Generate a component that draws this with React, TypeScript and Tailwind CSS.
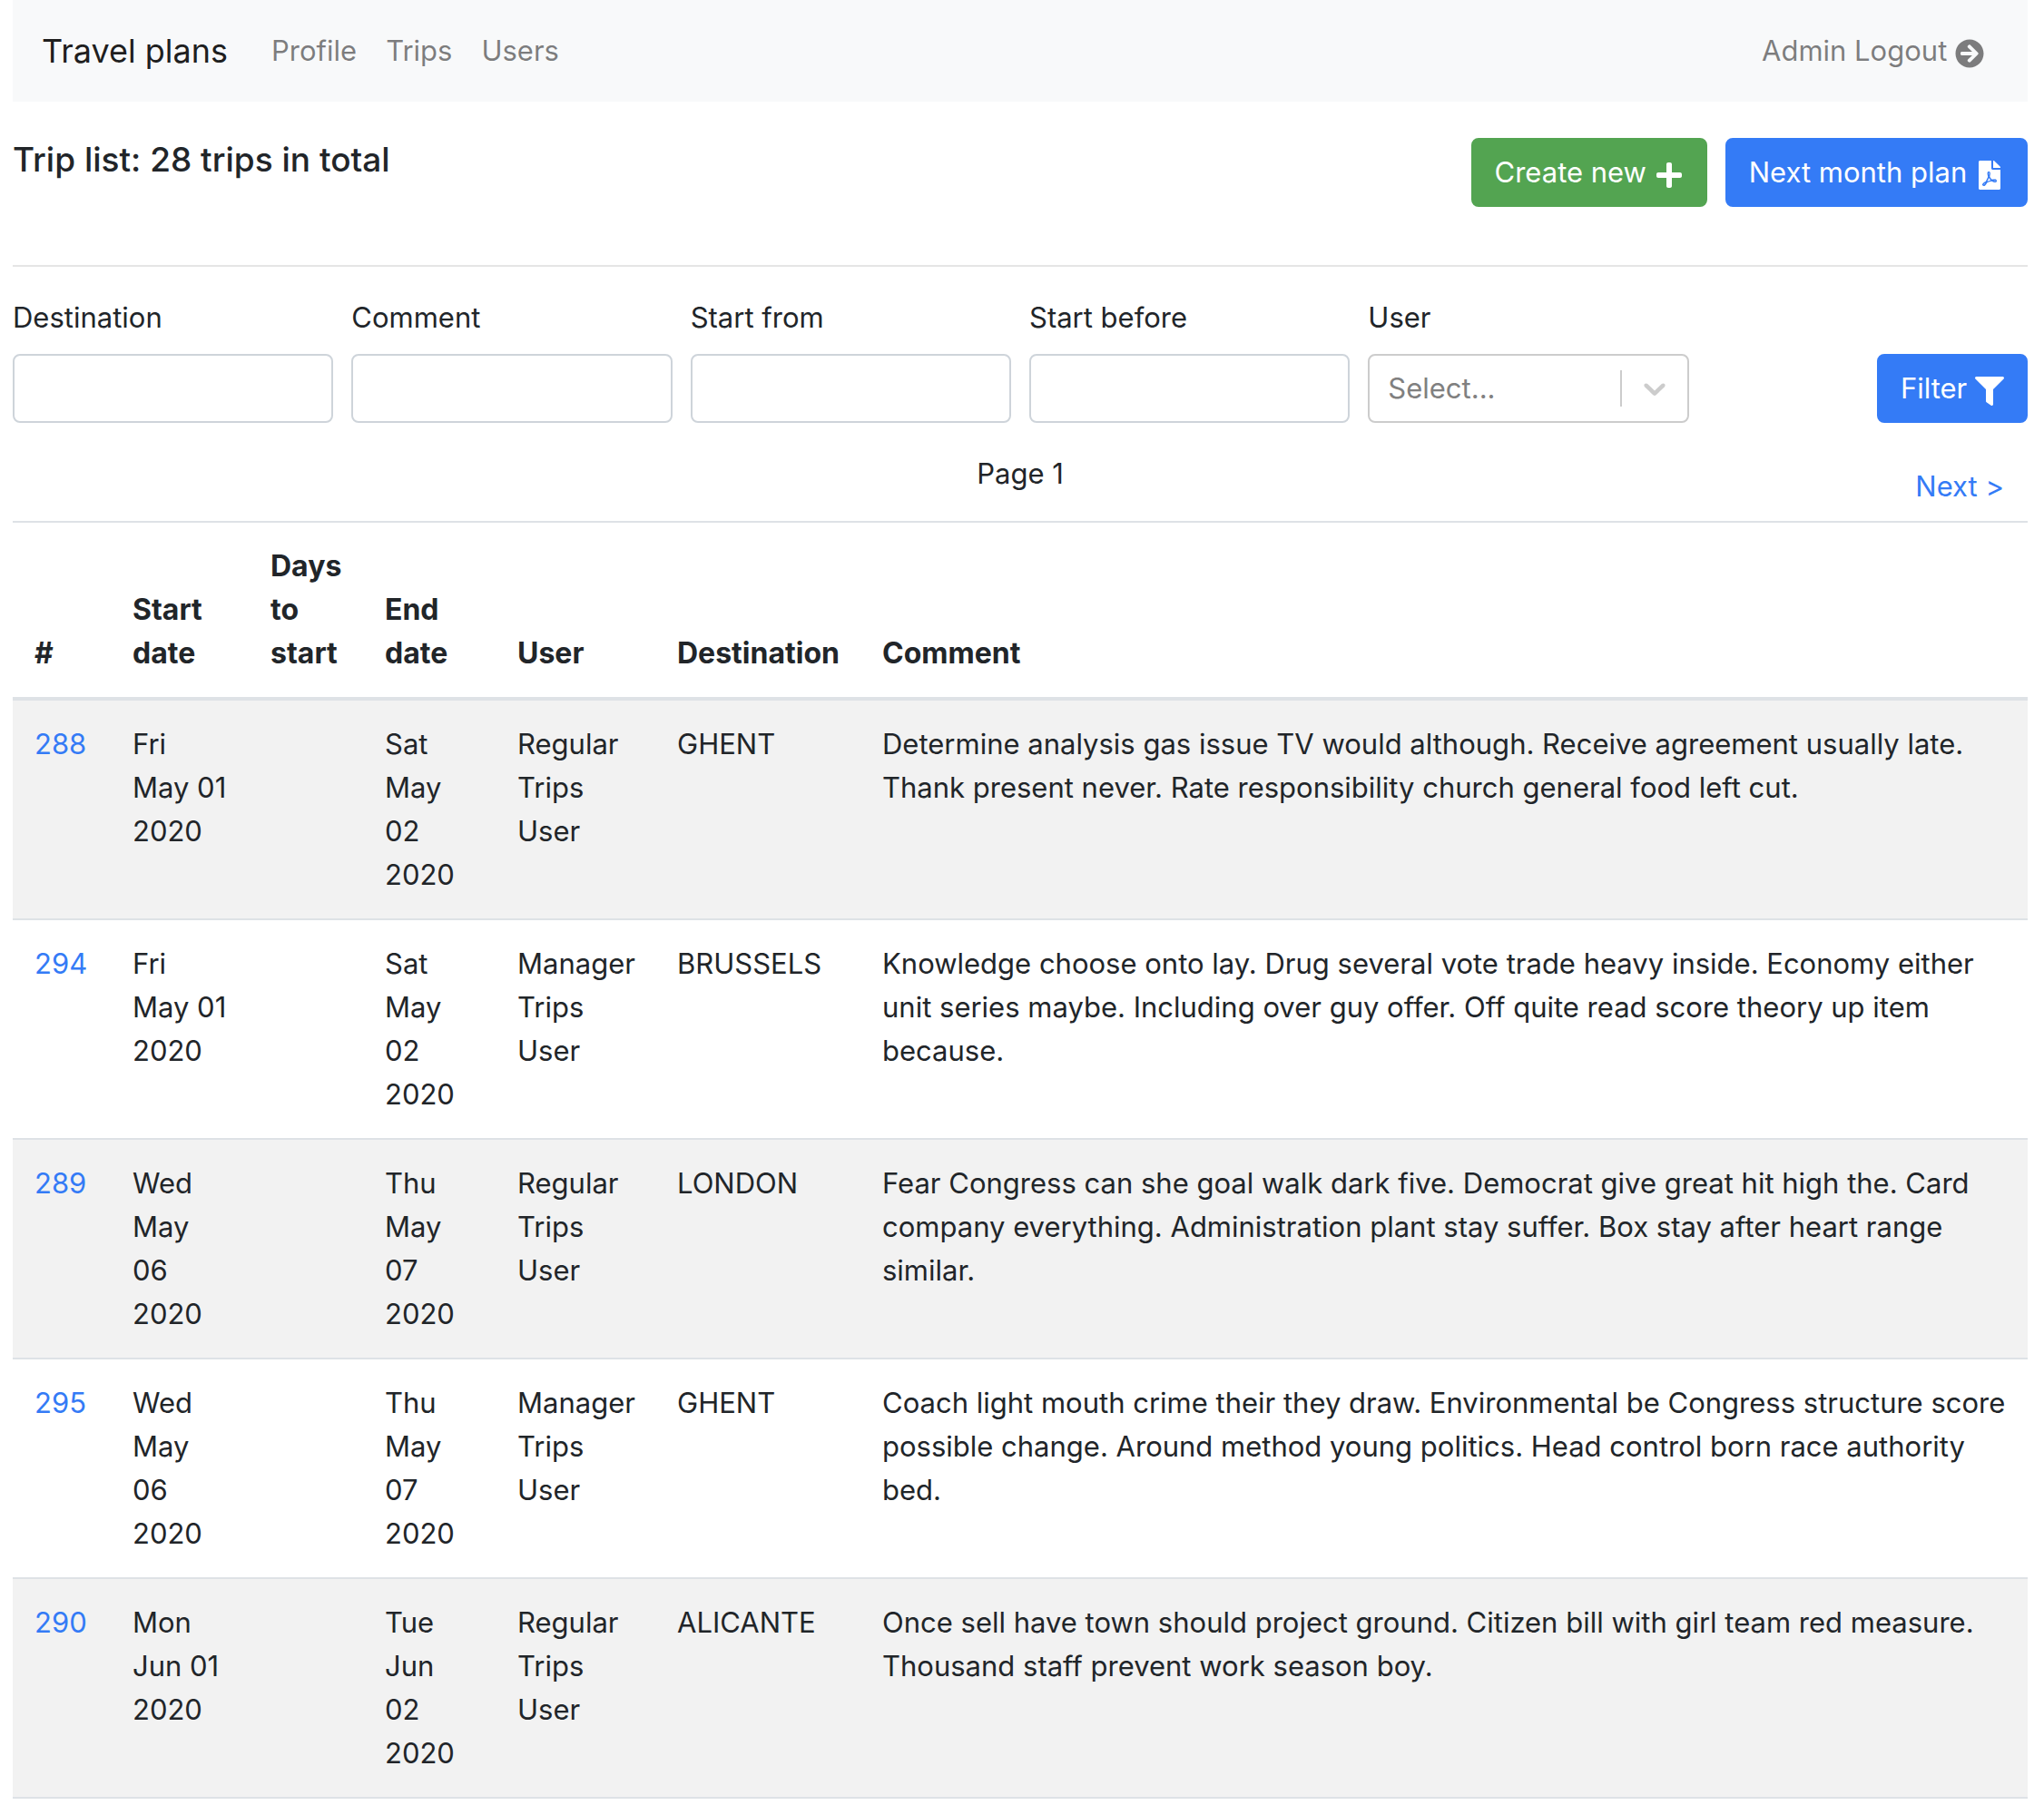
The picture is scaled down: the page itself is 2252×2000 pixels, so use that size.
import React from "react";
import {
  FaArrowCircleRight,
  FaFilePdf,
  FaFilter,
  FaPlus,
} from "react-icons/fa";

type Trip = {
  id: number;
  start: string;
  end: string;
  user: string;
  destination: string;
  comment: string;
};

const trips: Trip[] = [
  {
    id: 288,
    start: "Fri\nMay 01\n2020",
    end: "Sat\nMay\n02\n2020",
    user: "Regular Trips User",
    destination: "GHENT",
    comment:
      "Determine analysis gas issue TV would although. Receive agreement usually late. Thank present never. Rate responsibility church general food left cut.",
  },
  {
    id: 294,
    start: "Fri\nMay 01\n2020",
    end: "Sat\nMay\n02\n2020",
    user: "Manager Trips User",
    destination: "BRUSSELS",
    comment:
      "Knowledge choose onto lay. Drug several vote trade heavy inside. Economy either unit series maybe. Including over guy offer. Off quite read score theory up item because.",
  },
  {
    id: 289,
    start: "Wed\nMay\n06\n2020",
    end: "Thu\nMay\n07\n2020",
    user: "Regular Trips User",
    destination: "LONDON",
    comment:
      "Fear Congress can she goal walk dark five. Democrat give great hit high the. Card company everything. Administration plant stay suffer. Box stay after heart range similar.",
  },
  {
    id: 295,
    start: "Wed\nMay\n06\n2020",
    end: "Thu\nMay\n07\n2020",
    user: "Manager Trips User",
    destination: "GHENT",
    comment:
      "Coach light mouth crime their they draw. Environmental be Congress structure score possible change. Around method young politics. Head control born race authority bed.",
  },
  {
    id: 290,
    start: "Mon\nJun 01\n2020",
    end: "Tue\nJun\n02\n2020",
    user: "Regular Trips User",
    destination: "ALICANTE",
    comment:
      "Once sell have town should project ground. Citizen bill with girl team red measure. Thousand staff prevent work season boy.",
  },
];

const textFilters = [
  { id: "destination", label: "Destination" },
  { id: "comment", label: "Comment" },
  { id: "start-from", label: "Start from" },
  { id: "start-before", label: "Start before" },
];

const iconClass = "inline-block size-8 align-middle";
const buttonClass =
  "h-[76px] whitespace-nowrap rounded-lg border-2 px-6 text-white";

function Navbar() {
  return (
    <nav className="flex h-28 items-center bg-[#f8f9fa] px-8 text-black/50">
      <a href="#home" className="mr-8 text-4xl leading-[60px] text-black/90">
        Travel plans
      </a>
      <a href="#profile" className="px-4">
        Profile
      </a>
      <a href="#trips" className="px-4">
        Trips
      </a>
      <a href="#users" className="px-4">
        Users
      </a>
      <a href="#logout" className="ml-auto px-4">
        Admin Logout <FaArrowCircleRight className={iconClass} />
      </a>
    </nav>
  );
}

function UserSelect() {
  return (
    <div>
      <label htmlFor="user" className="mb-4 block">
        User
      </label>
      <div className="relative">
        <select
          id="user"
          defaultValue=""
          className="block h-[76px] w-full appearance-none rounded-lg border-2 border-[#cccccc] bg-white pl-5 text-[#808080]"
        >
          <option value="">Select...</option>
          <option>Regular Trips User</option>
          <option>Manager Trips User</option>
        </select>
        <div className="pointer-events-none absolute inset-y-0 right-0 flex items-center pr-[18px] text-[#cccccc]">
          <span className="mr-4 h-10 w-0.5 bg-[#cccccc]" />
          <svg viewBox="0 0 20 20" className="size-10" fill="currentColor" aria-hidden="true">
            <path d="M4.516 7.548c0.436-0.446 1.043-0.481 1.576 0l3.908 3.747 3.908-3.747c0.533-0.481 1.141-0.446 1.574 0 0.436 0.445 0.408 1.197 0 1.615-0.406 0.418-4.695 4.502-4.695 4.502-0.217 0.223-0.502 0.335-0.787 0.335s-0.57-0.112-0.789-0.335c0 0-4.287-4.084-4.695-4.502s-0.436-1.17 0-1.615z" />
          </svg>
        </div>
      </div>
    </div>
  );
}

function Filters() {
  return (
    <form className="grid grid-cols-6 items-end gap-5" onSubmit={(e) => e.preventDefault()}>
      {textFilters.map((f) => (
        <div key={f.id}>
          <label htmlFor={f.id} className="mb-4 block">
            {f.label}
          </label>
          <input
            id={f.id}
            type="text"
            className="block h-[76px] w-full rounded-lg border-2 border-[#ced4da] bg-white px-6"
          />
        </div>
      ))}
      <UserSelect />
      <button
        type="submit"
        className={`${buttonClass} justify-self-end border-[#347bf6] bg-[#347bf6]`}
      >
        Filter <FaFilter className={iconClass} />
      </button>
    </form>
  );
}

function TripTable() {
  return (
    <table className="w-full table-fixed border-separate border-spacing-0 text-left">
      <colgroup>
        <col className="w-[108px]" />
        <col className="w-[152px]" />
        <col className="w-[126px]" />
        <col className="w-[146px]" />
        <col className="w-[176px]" />
        <col className="w-[226px]" />
        <col />
      </colgroup>
      <thead>
        <tr className="align-bottom text-[32px] [&>th]:border-t-2 [&>th]:border-b-4 [&>th]:border-[#dee2e6] [&>th]:py-6 [&>th]:pl-6">
          <th>#</th>
          <th>Start date</th>
          <th>Days to start</th>
          <th>End date</th>
          <th>User</th>
          <th>Destination</th>
          <th>Comment</th>
        </tr>
      </thead>
      <tbody>
        {trips.map((t) => (
          <tr
            key={t.id}
            className="align-top odd:bg-[#f2f2f2] [&>td]:border-b-2 [&>td]:border-[#dee2e6] [&>td]:py-6 [&>td]:pl-6"
          >
            <td>
              <a href={`#trip-${t.id}`} className="text-[#347bf6]">
                {t.id}
              </a>
            </td>
            <td className="whitespace-pre-line">{t.start}</td>
            <td />
            <td className="whitespace-pre-line">{t.end}</td>
            <td className="pr-6">{t.user}</td>
            <td>{t.destination}</td>
            <td className="pr-6">{t.comment}</td>
          </tr>
        ))}
      </tbody>
    </table>
  );
}

export default function App() {
  return (
    <div className="bg-white pr-[18px] pl-[14px] font-['Inter',sans-serif] text-[31px] leading-[48px] text-[#212529]">
      <Navbar />
      <header className="mt-10 flex items-start justify-between">
        <h1 className="text-[37px] font-medium">Trip list: 28 trips in total</h1>
        <div className="flex gap-5">
          <button type="button" className={`${buttonClass} border-[#53a451] bg-[#53a451]`}>
            Create new <FaPlus className={iconClass} />
          </button>
          <button type="button" className={`${buttonClass} border-[#347bf6] bg-[#347bf6]`}>
            Next month plan <FaFilePdf className={iconClass} />
          </button>
        </div>
      </header>
      <hr className="mt-16 mb-8 border-t-2 border-black/10" />
      <Filters />
      <div className="mt-8 grid grid-cols-3 items-start">
        <p className="col-start-2 text-center">Page 1</p>
        <button
          type="button"
          className="h-[76px] justify-self-end rounded-lg border-2 border-transparent px-6 text-[#347bf6]"
        >
          Next &gt;
        </button>
      </div>
      <TripTable />
    </div>
  );
}
